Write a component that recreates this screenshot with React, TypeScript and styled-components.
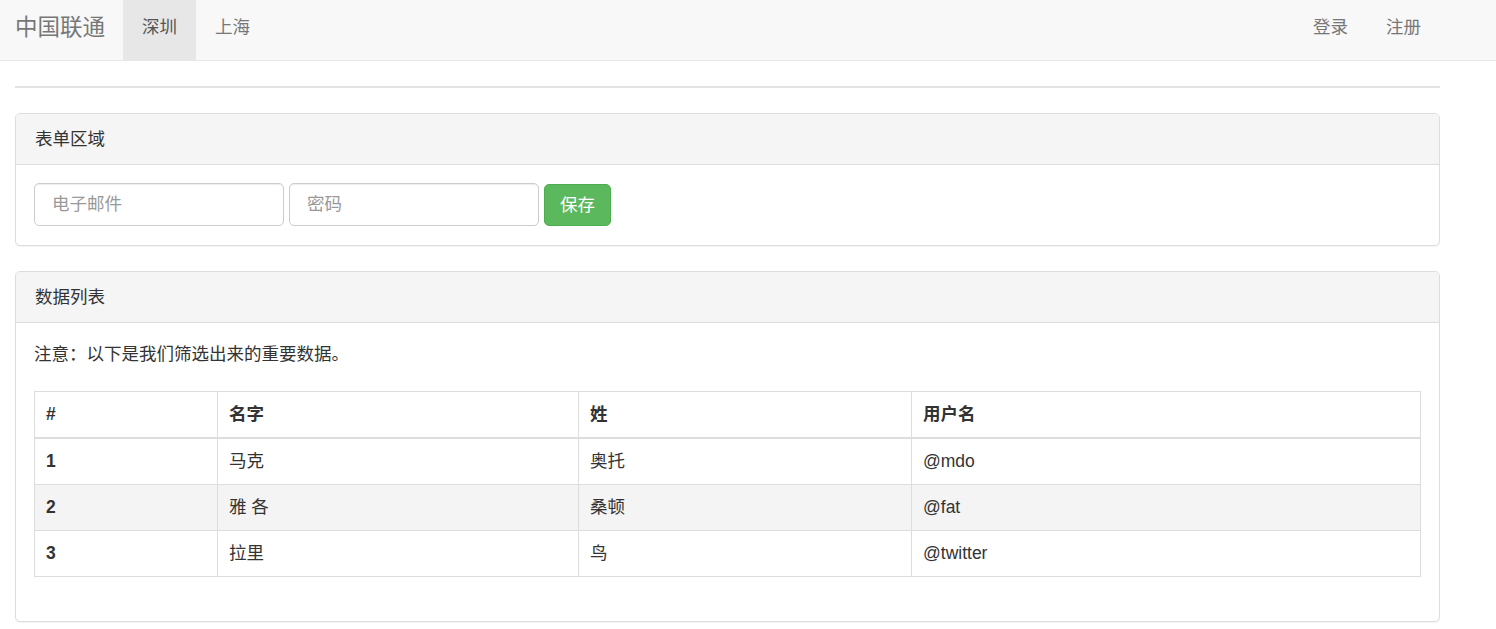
import React from "react";
import styled, { createGlobalStyle } from "styled-components";

const Global = createGlobalStyle`
  * { box-sizing: border-box; }
  html, body { margin: 0; padding: 0; background: #fff; }
  body {
    font-family: "Liberation Sans", Arial, "Noto Sans CJK SC", sans-serif;
    font-size: 17.5px;
    line-height: 25px;
    color: #333;
  }
`;

const Navbar = styled.nav`
  background: #f8f8f8;
  border-bottom: 1px solid #e7e7e7;
  height: 61px;
`;

const NavInner = styled.div`
  width: 1455px;
  padding: 0 15px;
  display: flex;
  align-items: stretch;
  height: 60px;
`;

const Brand = styled.a`
  font-size: 22.5px;
  line-height: 25px;
  color: #777;
  padding: 15px 18px 20px 0;
  text-decoration: none;
`;

const NavList = styled.ul<{ $right?: boolean }>`
  list-style: none;
  margin: 0;
  margin-left: ${(p) => (p.$right ? "auto" : "0")};
  padding: 0;
  display: flex;
`;

const NavLink = styled.a<{ $active?: boolean }>`
  display: block;
  padding: 15px 19px 20px;
  line-height: 25px;
  font-size: 17.5px;
  color: ${(p) => (p.$active ? "#555" : "#777")};
  background: ${(p) => (p.$active ? "#e7e7e7" : "transparent")};
  text-decoration: none;
`;

const Container = styled.div`
  width: 1455px;
  padding: 0 15px;
`;

const Rule = styled.hr`
  margin: 25px 0;
  border: 0;
  border-top: 2px solid #e3e3e3;
`;

const Panel = styled.section`
  border: 1px solid #ddd;
  border-radius: 5px;
  background: #fff;
  box-shadow: 0 1px 1px rgba(0, 0, 0, 0.05);
  margin-bottom: 25px;
`;

const PanelHeading = styled.div`
  background: #f5f5f5;
  border-bottom: 1px solid #ddd;
  border-radius: 4px 4px 0 0;
  height: 51px;
  padding: 0 19px;
  display: flex;
  align-items: center;
  font-size: 17.5px;
  color: #333;
`;

const PanelBody = styled.div`
  padding: 18px 18px 19px;
`;

const InlineForm = styled.form`
  display: flex;
  gap: 5px;
  align-items: center;
`;

const Input = styled.input`
  width: 250px;
  height: 43px;
  padding: 7px 17px;
  font-family: "Liberation Sans", Arial, "Noto Sans CJK SC", sans-serif;
  font-size: 17.5px;
  color: #555;
  border: 1px solid #ccc;
  border-radius: 5px;
  box-shadow: inset 0 1px 1px rgba(0, 0, 0, 0.075);
  outline: none;
  &::placeholder { color: #999; }
`;

const SaveButton = styled.button`
  height: 42px;
  padding: 0 15px 3px;
  font-family: "Liberation Sans", Arial, "Noto Sans CJK SC", sans-serif;
  font-size: 17.5px;
  color: #fff;
  background: #5cb85c;
  border: 1px solid #4cae4c;
  border-radius: 5px;
`;

const Note = styled.p`
  margin: 1px 0 24px;
  line-height: 25px;
`;

const Table = styled.table`
  width: 100%;
  border-collapse: collapse;
  border: 1px solid #ddd;
  margin-bottom: 25px;
`;

const Th = styled.th`
  text-align: left;
  font-weight: bold;
  padding: 10px 11px;
  line-height: 25px;
  border: 1px solid #ddd;
  border-bottom: 2px solid #ddd;
`;

const Td = styled.td<{ $bold?: boolean }>`
  padding: 10px 11px;
  line-height: 25px;
  border: 1px solid #ddd;
  font-weight: ${(p) => (p.$bold ? "bold" : "normal")};
`;

const Row = styled.tr<{ $striped?: boolean }>`
  background: ${(p) => (p.$striped ? "#f4f4f4" : "transparent")};
`;

const rows = [
  { id: "1", first: "马克", last: "奥托", user: "@mdo" },
  { id: "2", first: "雅 各", last: "桑顿", user: "@fat" },
  { id: "3", first: "拉里", last: "鸟", user: "@twitter" },
];

export default function App() {
  return (
    <>
      <Global />
      <Navbar>
        <NavInner>
          <Brand href="#">中国联通</Brand>
          <NavList>
            <li><NavLink $active href="#">深圳</NavLink></li>
            <li><NavLink href="#">上海</NavLink></li>
          </NavList>
          <NavList $right>
            <li><NavLink href="#">登录</NavLink></li>
            <li><NavLink href="#">注册</NavLink></li>
          </NavList>
        </NavInner>
      </Navbar>
      <Container>
        <Rule />
        <Panel>
          <PanelHeading>表单区域</PanelHeading>
          <PanelBody>
            <InlineForm onSubmit={(e) => e.preventDefault()}>
              <Input type="email" placeholder="电子邮件" />
              <Input type="password" placeholder="密码" />
              <SaveButton type="submit">保存</SaveButton>
            </InlineForm>
          </PanelBody>
        </Panel>
        <Panel>
          <PanelHeading>数据列表</PanelHeading>
          <PanelBody>
            <Note>注意：以下是我们筛选出来的重要数据。</Note>
            <Table>
              <colgroup>
                <col style={{ width: 183 }} />
                <col style={{ width: 361 }} />
                <col style={{ width: 333 }} />
                <col />
              </colgroup>
              <thead>
                <tr>
                  <Th>#</Th>
                  <Th>名字</Th>
                  <Th>姓</Th>
                  <Th>用户名</Th>
                </tr>
              </thead>
              <tbody>
                {rows.map((r, i) => (
                  <Row key={r.id} $striped={i === 1}>
                    <Td $bold>{r.id}</Td>
                    <Td>{r.first}</Td>
                    <Td>{r.last}</Td>
                    <Td>{r.user}</Td>
                  </Row>
                ))}
              </tbody>
            </Table>
          </PanelBody>
        </Panel>
      </Container>
    </>
  );
}
